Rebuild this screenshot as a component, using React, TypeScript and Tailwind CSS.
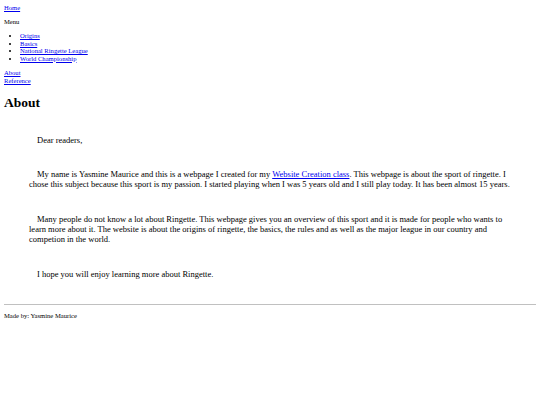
export default function App() {
  const serif = { fontFamily: '"Liberation Serif", "Times New Roman", serif' };
  return (
    <div className="bg-white text-black px-[4px] pt-[4px]" style={serif}>
      <div className="text-[6.6px] leading-[1.15]">
        <a href="#" className="text-[#0000ee] underline">Home</a>
        <p className="my-[6.5px]">Menu</p>
        <ul className="list-disc pl-[16px] my-[6.5px]">
          <li><a href="#" className="text-[#0000ee] underline">Origins</a></li>
          <li><a href="#" className="text-[#0000ee] underline">Basics</a></li>
          <li><a href="#" className="text-[#0000ee] underline">National Ringette League</a></li>
          <li><a href="#" className="text-[#0000ee] underline">World Championship</a></li>
        </ul>
        <a href="#" className="text-[#0000ee] underline">About</a>
        <br />
        <a href="#" className="text-[#0000ee] underline">Reference</a>
      </div>
      <h1 className="text-[13.5px] font-bold leading-[1.15] mt-[11px] mb-0">About</h1>
      <div className="text-[8.5px] leading-[1.15] mx-[25px]">
        <p className="indent-[8px] mt-[25px]">Dear readers,</p>
        <p className="indent-[8px] mt-[25px]">
          My name is Yasmine Maurice and this is a webpage I created for my{" "}
          <a href="#" className="text-[#0000ee] underline">Website Creation class</a>. This webpage is about the sport of ringette. I chose this subject because this sport is my passion. I started playing when I was 5 years old and I still play today. It has been almost 15 years.
        </p>
        <p className="indent-[8px] mt-[25.5px]">
          Many people do not know a lot about Ringette. This webpage gives you an overview of this sport and it is made for people who wants to learn more about it. The website is about the origins of ringette, the basics, the rules and as well as the major league in our country and competion in the world.
        </p>
        <p className="indent-[8px] mt-[25px]">I hope you will enjoy learning more about Ringette.</p>
      </div>
      <hr className="mt-[24px] border-t border-[#c0c0c0]" />
      <p className="text-[6.6px] leading-[1.15] mt-[7px]">Made by: Yasmine Maurice</p>
    </div>
  );
}
